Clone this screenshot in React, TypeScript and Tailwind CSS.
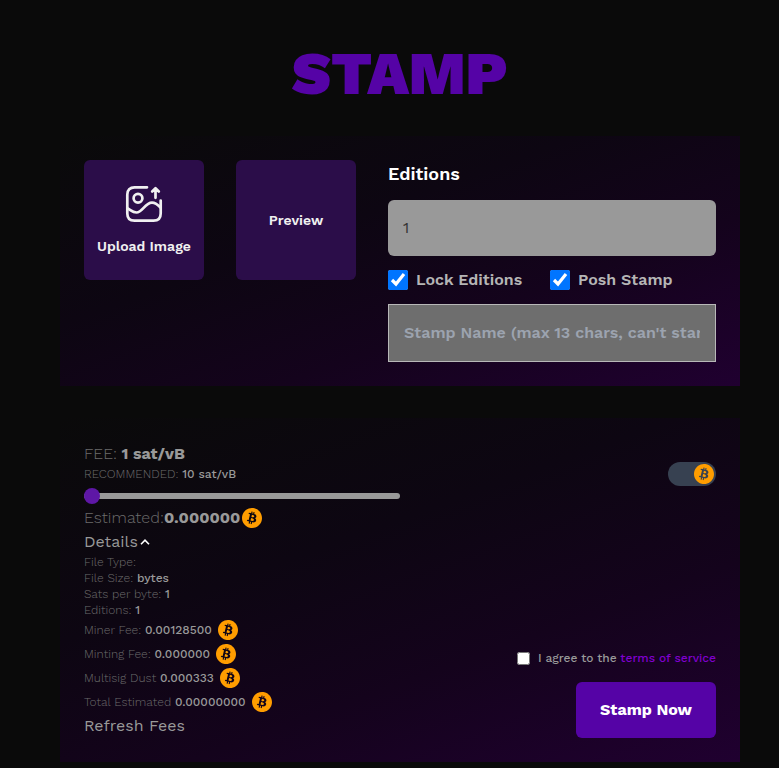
import { useState } from "react";
import { SiBitcoin } from "react-icons/si";

const CARD = "bg-[linear-gradient(160deg,#0a0a0a_0%,#0d0612_38%,#14031c_66%,#200030_100%)] p-6";

function Coin() {
  return <SiBitcoin className="h-5 w-5 shrink-0 text-[#ff9d00]" aria-hidden />;
}

function UploadIcon() {
  return (
    <svg
      width="40"
      height="40"
      viewBox="0 0 40 40"
      fill="none"
      stroke="currentColor"
      strokeWidth="2.700"
      strokeLinecap="round"
      strokeLinejoin="round"
      aria-hidden
    >
      <path d="M23 3.300H10.500C6 3.300 3.300 6 3.300 10.500v19c0 4.500 2.700 7.200 7.200 7.200h19c4.500 0 7.200-2.700 7.200-7.200V16.500" />
      <circle cx="14" cy="14.200" r="4.400" />
      <path d="M3.800 24.500c3 1.500 4.500 4 8.700 4 6 0 8.500-9.800 15.500-9.800 3.500 0 6 2.300 8.500 4.800" />
      <path d="M31.500 13.800V4.800M28.200 7.500l3.300-3.300 3.300 3.300" />
    </svg>
  );
}

const details = [
  { label: "File Type:", value: "" },
  { label: "File Size:", value: "bytes" },
  { label: "Sats per byte:", value: "1" },
  { label: "Editions:", value: "1" },
];

const fees = [
  { label: "Miner Fee:", value: "0.00128500" },
  { label: "Minting Fee:", value: "0.000000" },
  { label: "Multisig Dust", value: "0.000333" },
  { label: "Total Estimated", value: "0.00000000" },
];

export default function App() {
  const [open, setOpen] = useState(true);
  const [fee, setFee] = useState(1);

  return (
    <div className="min-h-screen bg-[#0a0a0a] pr-[39px] pl-[60px] font-['Work_Sans',Inter,sans-serif] text-[#999999]">
      <main className="flex flex-col gap-8 pt-11 pb-1.5">
        <h1 className="text-center text-[60px] leading-[60px] font-black text-[#5503a6]">STAMP</h1>

        <section className={`${CARD} flex items-start gap-8`}>
          <button
            type="button"
            className="flex h-30 w-30 shrink-0 flex-col items-center justify-center gap-3 rounded-md bg-[#2b0d49] text-sm leading-5 font-semibold whitespace-nowrap text-[#f0f0f0]"
          >
            <UploadIcon />
            Upload Image
          </button>
          <button
            type="button"
            className="h-30 w-30 shrink-0 rounded-md bg-[#2b0d49] text-sm leading-5 font-semibold text-[#f0f0f0]"
          >
            Preview
          </button>
          <div className="flex min-w-0 flex-1 flex-col">
            <label htmlFor="editions" className="text-lg leading-7 font-semibold text-white">
              Editions
            </label>
            <input
              id="editions"
              type="text"
              defaultValue="1"
              className="mt-3 h-14 w-full rounded-md bg-[#999999] px-[15px] pb-0.5 text-base text-[#333333]"
            />
            <div className="mt-3.5 grid grid-cols-[162px_1fr] text-base leading-5 font-semibold text-[#b5b5b5]">
              <label className="flex items-center gap-2 whitespace-nowrap">
                <input type="checkbox" defaultChecked className="h-5 w-5" />
                Lock Editions
              </label>
              <label className="flex items-center gap-2 whitespace-nowrap">
                <input type="checkbox" defaultChecked className="h-5 w-5" />
                Posh Stamp
              </label>
            </div>
            <input
              type="text"
              aria-label="Stamp name"
              placeholder="Stamp Name (max 13 chars, can't start with A)"
              className="mt-3.5 h-[58px] w-full border border-[#b8b8b8] bg-[#6e6e6e] px-[15px] pb-0.5 text-base font-semibold text-[#dddddd] placeholder:text-[#9ca3af]"
            />
          </div>
        </section>

        <section className={`${CARD} grid grid-cols-2`}>
          <div>
            <p className="text-base leading-6 font-extralight">
              <span className="font-light text-[#6c6c6c]">FEE:</span> <span className="font-bold">{fee} sat/vB</span>
            </p>
            <p className="text-xs leading-4 font-light text-[#6c6c6c]">
              RECOMMENDED: <span className="font-medium text-[#999999]">10 sat/vB</span>
            </p>
            <div className="flex h-6 items-center pt-1">
              <input
                type="range"
                aria-label="Fee"
                min="1"
                max="500"
                value={fee}
                onChange={(e) => setFee(Number(e.target.value))}
                className="h-1.5 w-full appearance-none rounded-full bg-[#999999] [&::-webkit-slider-thumb]:h-4 [&::-webkit-slider-thumb]:w-4 [&::-webkit-slider-thumb]:appearance-none [&::-webkit-slider-thumb]:rounded-full [&::-webkit-slider-thumb]:bg-[#5e17a6]"
              />
            </div>
            <p className="flex items-center text-base leading-6 font-light text-[#6c6c6c]">
              Estimated:<span className="mr-0.5 font-bold text-[#999999]">0.000000</span>
              <Coin />
            </p>
            <button
              type="button"
              aria-expanded={open}
              onClick={() => setOpen(!open)}
              className="flex items-center gap-0.5 text-base leading-6"
            >
              Details
              <svg width="10" height="6" viewBox="0 0 10 6" fill="none" stroke="#ffffff" strokeWidth="1.600" aria-hidden>
                <path d="M1 5.200 5 1.200l4 4" />
              </svg>
            </button>
            {open && (
              <div className="text-xs font-light text-[#6c6c6c]">
                {details.map((d) => (
                  <p key={d.label} className="leading-4">
                    {d.label} <span className="font-medium text-[#999999]">{d.value}</span>
                  </p>
                ))}
                {fees.map((f) => (
                  <p key={f.label} className="flex items-center leading-6">
                    <span>
                      {f.label} <span className="font-medium text-[#999999]">{f.value}</span>
                    </span>
                    <span className="ml-1.5">
                      <Coin />
                    </span>
                  </p>
                ))}
              </div>
            )}
            <button type="button" className="block text-base leading-6">
              Refresh Fees
            </button>
          </div>

          <div className="flex flex-col items-end justify-between pt-5">
            <button
              type="button"
              role="switch"
              aria-checked="true"
              aria-label="Pay in bitcoin"
              className="flex h-6 w-12 items-center justify-end rounded-full bg-[#374151] px-0.5"
            >
              <Coin />
            </button>
            <div className="flex flex-col items-end gap-4">
              <div className="flex items-center gap-2 text-xs leading-4 font-medium">
                <input id="terms" type="checkbox" className="h-[13px] w-[13px]" />
                <span className="whitespace-nowrap">
                  <label htmlFor="terms">I agree to the</label>{" "}
                  <a href="#terms" className="text-[#7f00cc]">
                    terms of service
                  </a>
                </span>
              </div>
              <button
                type="button"
                className="h-14 w-[140px] rounded-md bg-[#5503a6] text-base font-bold text-white"
              >
                Stamp Now
              </button>
            </div>
          </div>
        </section>
      </main>
    </div>
  );
}
